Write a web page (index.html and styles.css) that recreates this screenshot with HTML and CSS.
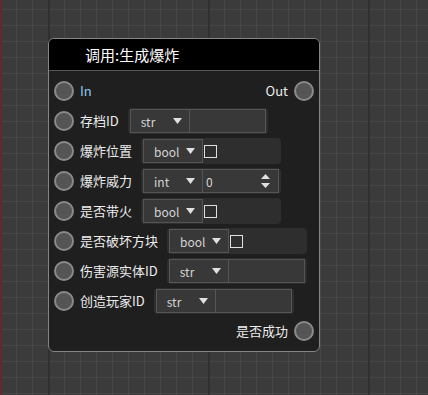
FILE: index.html
```html
<!DOCTYPE html>
<html lang="zh">

<head>
    <meta charset="UTF-8">
    <title>调用:生成爆炸</title>
    <link rel="stylesheet" href="styles.css">
</head>

<body>
    <div class="node">
        <div class="node-title">调用:生成爆炸</div>
        <div class="node-body">
            <div class="row">
                <span class="pin"></span>
                <span class="label exec">In</span>
                <span class="spacer"></span>
                <span class="label">Out</span>
                <span class="pin"></span>
            </div>

            <div class="row">
                <span class="pin"></span>
                <span class="label">存档ID</span>
                <div class="field">
                    <div class="select">str<svg class="arrow" viewBox="0 0 9 6"><polygon points="0,0 9,0 4.5,6"/></svg></div>
                    <div class="text-input"></div>
                </div>
            </div>

            <div class="row">
                <span class="pin"></span>
                <span class="label">爆炸位置</span>
                <div class="field">
                    <div class="select">bool<svg class="arrow" viewBox="0 0 9 6"><polygon points="0,0 9,0 4.5,6"/></svg></div>
                    <span class="checkbox"></span>
                </div>
            </div>

            <div class="row">
                <span class="pin"></span>
                <span class="label">爆炸威力</span>
                <div class="field">
                    <div class="select">int<svg class="arrow" viewBox="0 0 9 6"><polygon points="0,0 9,0 4.5,6"/></svg></div>
                    <div class="text-input number">0
                        <svg class="spinner" viewBox="0 0 9 14"><polygon points="4.5,0 9,5 0,5"/><polygon points="0,9 9,9 4.5,14"/></svg>
                    </div>
                </div>
            </div>

            <div class="row">
                <span class="pin"></span>
                <span class="label">是否带火</span>
                <div class="field">
                    <div class="select">bool<svg class="arrow" viewBox="0 0 9 6"><polygon points="0,0 9,0 4.5,6"/></svg></div>
                    <span class="checkbox"></span>
                </div>
            </div>

            <div class="row">
                <span class="pin"></span>
                <span class="label">是否破坏方块</span>
                <div class="field">
                    <div class="select">bool<svg class="arrow" viewBox="0 0 9 6"><polygon points="0,0 9,0 4.5,6"/></svg></div>
                    <span class="checkbox"></span>
                </div>
            </div>

            <div class="row">
                <span class="pin"></span>
                <span class="label">伤害源实体ID</span>
                <div class="field">
                    <div class="select">str<svg class="arrow" viewBox="0 0 9 6"><polygon points="0,0 9,0 4.5,6"/></svg></div>
                    <div class="text-input"></div>
                </div>
            </div>

            <div class="row">
                <span class="pin"></span>
                <span class="label">创造玩家ID</span>
                <div class="field">
                    <div class="select">str<svg class="arrow" viewBox="0 0 9 6"><polygon points="0,0 9,0 4.5,6"/></svg></div>
                    <div class="text-input"></div>
                </div>
            </div>

            <div class="row">
                <span class="spacer"></span>
                <span class="label">是否成功</span>
                <span class="pin"></span>
            </div>
        </div>
    </div>
</body>

</html>
```

FILE: styles.css
```css
html {
    border-left: 2px solid #5e2c2c;
    background-color: #3b3b3b;
}

body {
    margin: 0;
    height: 395px;
    padding: 38px 0 0 46px;
    box-sizing: border-box;
    font-family: "Noto Sans CJK SC", "Noto Sans", sans-serif;
    background-image:
        linear-gradient(to right, #303030 2px, transparent 2px),
        linear-gradient(to right, #464646 1px, transparent 1px),
        linear-gradient(to bottom, #464646 1px, transparent 1px);
    background-size: 160px 100%, 16px 100%, 100% 16px;
    background-position: 46px 0, -2px 0, 0 9px;
}

.node {
    width: 270px;
    border: 1px solid #858585;
    border-radius: 6px;
    background: #1f1f1f;
    overflow: hidden;
}

.node-title {
    height: 31px;
    line-height: 31px;
    background: #000;
    color: #fff;
    font-size: 15px;
    padding-left: 36px;
    border-bottom: 1px solid #555;
}

.node-body {
    padding: 5px;
}

.row {
    display: flex;
    align-items: center;
    height: 30px;
}

.pin {
    width: 16px;
    height: 16px;
    border: 2px solid #8a8a8a;
    border-radius: 50%;
    background: #555;
    flex-shrink: 0;
}

.label {
    color: #ededed;
    font-size: 13px;
    line-height: 16px;
    margin: 0 6px;
}

.label.exec {
    color: #8ccaf7;
}

.spacer {
    flex: 1;
}

.field {
    display: flex;
    align-items: center;
    width: 136px;
    height: 24px;
    padding: 1px 2px;
    margin-left: 3px;
    background: #2e2e2e;
    border-radius: 4px;
}

.select {
    display: flex;
    align-items: center;
    justify-content: space-between;
    width: 60px;
    height: 24px;
    box-sizing: border-box;
    padding: 0 7px 0 10px;
    border: 1px solid #555;
    background: #383838;
    color: #d4d4d4;
    font-size: 12px;
    flex-shrink: 0;
}

.arrow {
    width: 9px;
    height: 6px;
    fill: #e0e0e0;
}

.text-input {
    flex: 1;
    height: 24px;
    box-sizing: border-box;
    border: 1px solid #555;
    border-left: none;
    background: #383838;
}

.text-input.number {
    display: flex;
    align-items: center;
    justify-content: space-between;
    padding: 0 8px 0 3px;
    color: #d4d4d4;
    font-size: 12px;
}

.spinner {
    width: 9px;
    height: 14px;
    fill: #e0e0e0;
}

.checkbox {
    width: 11px;
    height: 11px;
    border: 1px solid #e0e0e0;
    margin-left: 1px;
}
```
